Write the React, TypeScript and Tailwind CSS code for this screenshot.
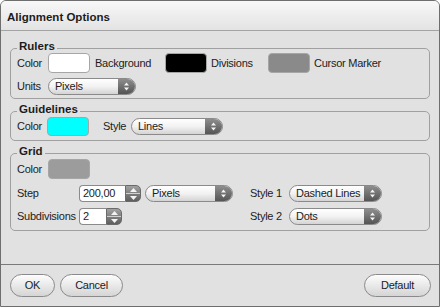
import React from 'react';

const Arrows = () => (
  <svg width="7" height="11" viewBox="0 0 7 11">
    <path d="M3.5 1.5 L6 4.5 H1Z M3.5 9.5 L6 6.5 H1Z" fill="#f4f4f4" />
  </svg>
);

const Select = ({ value, w }: { value: string; w: string }) => (
  <div
    className={`flex h-[17px] ${w} rounded-full border border-[#8a8a8a] overflow-hidden bg-gradient-to-b from-white via-[#f2f2f2] to-[#d4d4d4]`}
  >
    <span className="flex-1 pl-[6px] leading-[15px] whitespace-nowrap overflow-hidden">{value}</span>
    <span className="w-[17px] flex items-center justify-center bg-gradient-to-b from-[#8e8e8e] to-[#555555]">
      <Arrows />
    </span>
  </div>
);

const Spin = ({ value, w }: { value: string; w: string }) => (
  <div className="flex h-[17px]">
    <div
      className={`${w} bg-white border border-r-0 border-[#8a8a8a] rounded-l-[4px] pl-[3px] leading-[15px]`}
    >
      {value}
    </div>
    <div className="w-[16px] flex flex-col rounded-r-[5px] overflow-hidden border border-[#6a6a6a] bg-gradient-to-b from-[#a2a2a2] to-[#5e5e5e]">
      <span className="flex-1 flex items-center justify-center">
        <svg width="7" height="4" viewBox="0 0 7 4">
          <path d="M3.5 0 L7 4 H0Z" fill="#f4f4f4" />
        </svg>
      </span>
      <span className="h-px bg-[#cfcfcf]" />
      <span className="flex-1 flex items-center justify-center">
        <svg width="7" height="4" viewBox="0 0 7 4">
          <path d="M3.5 4 L7 0 H0Z" fill="#f4f4f4" />
        </svg>
      </span>
    </div>
  </div>
);

const Swatch = ({ color, h = 'h-[20px]' }: { color: string; h?: string }) => (
  <div className={`w-[42px] ${h} rounded-[4px] border border-[#a6a6a6] ${color}`} />
);

const Legend = ({ children }: { children: React.ReactNode }) => (
  <legend className="px-[2px] pb-[5px] font-bold text-[11.5px] leading-[12px] tracking-normal">{children}</legend>
);

const Button = ({ label, w }: { label: string; w: string }) => (
  <button
    type="button"
    className={`${w} h-[23px] rounded-full border border-[#8a8a8a] bg-gradient-to-b from-[#fdfdfd] to-[#d5d5d5] text-center`}
  >
    {label}
  </button>
);

export default function App() {
  return (
    <div className="w-[440px] h-[307px] flex flex-col bg-[#e1e1e1] border border-[#6e6e6e] rounded-t-[6px] overflow-hidden font-['Liberation_Sans',Arial,sans-serif] text-[11px] tracking-[-0.25px] text-[#1c1c1c]">
      <div className="h-[30px] shrink-0 flex items-center pl-[6px] pt-[4px] border-b border-[#a4a4a4] bg-gradient-to-b from-[#f8f8f8] to-[#e3e3e3]">
        <span className="font-bold text-[11.5px] tracking-normal">Alignment Options</span>
      </div>

      <div className="flex-1 flex flex-col pt-[9px] px-[9px]">
        {/* Rulers */}
        <fieldset className="border border-[#a0a0a0] rounded-[5px] pl-[6px] pb-[3px]">
          <Legend>Rulers</Legend>
          <div className="-mt-[4px] flex flex-col gap-[4px]">
            <div className="flex items-center h-[20px]">
              <span className="w-[31px]">Color</span>
              <Swatch color="bg-white" />
              <span className="w-[75px] pl-[5px]">Background</span>
              <Swatch color="bg-black" />
              <span className="w-[61px] pl-[4px]">Divisions</span>
              <Swatch color="bg-[#8a8a8a]" />
              <span className="pl-[4px]">Cursor Marker</span>
            </div>
            <div className="flex items-center h-[18px]">
              <span className="w-[31px]">Units</span>
              <Select value="Pixels" w="w-[88px]" />
            </div>
          </div>
        </fieldset>

        {/* Guidelines */}
        <fieldset className="mt-[4px] border border-[#a0a0a0] rounded-[5px] pl-[6px] pb-[4px]">
          <Legend>Guidelines</Legend>
          <div className="-mt-[3px] flex items-center h-[19px]">
            <span className="w-[30px]">Color</span>
            <Swatch color="bg-[#00ffff]" h="h-[19px]" />
            <span className="w-[42px] pl-[14px]">Style</span>
            <Select value="Lines" w="w-[92px]" />
          </div>
        </fieldset>

        {/* Grid */}
        <fieldset className="mt-[4px] border border-[#a0a0a0] rounded-[5px] pl-[6px] pb-[5px]">
          <Legend>Grid</Legend>
          <div className="-mt-[3px] flex items-center h-[20px]">
            <span className="w-[31px]">Color</span>
            <Swatch color="bg-[#9c9c9c]" />
          </div>
          <div className="mt-[6px] grid grid-cols-[62px_171px_39px_93px] gap-y-[6px] items-center">
            <span>Step</span>
            <div className="flex items-center gap-[4px]">
              <Spin value="200,00" w="w-[46px]" />
              <Select value="Pixels" w="w-[88px]" />
            </div>
            <span>Style 1</span>
            <Select value="Dashed Lines" w="w-[93px]" />

            <span>Subdivisions</span>
            <div className="flex items-center">
              <Spin value="2" w="w-[27px]" />
            </div>
            <span>Style 2</span>
            <Select value="Dots" w="w-[93px]" />
          </div>
        </fieldset>
      </div>

      <div className="h-[42px] shrink-0 border-t border-[#7a7a7a] flex items-start pt-[9px] pl-[9px] pr-[8px] gap-[5px]">
        <Button label="OK" w="w-[45px]" />
        <Button label="Cancel" w="w-[63px]" />
        <div className="flex-1" />
        <Button label="Default" w="w-[67px]" />
      </div>
    </div>
  );
}
